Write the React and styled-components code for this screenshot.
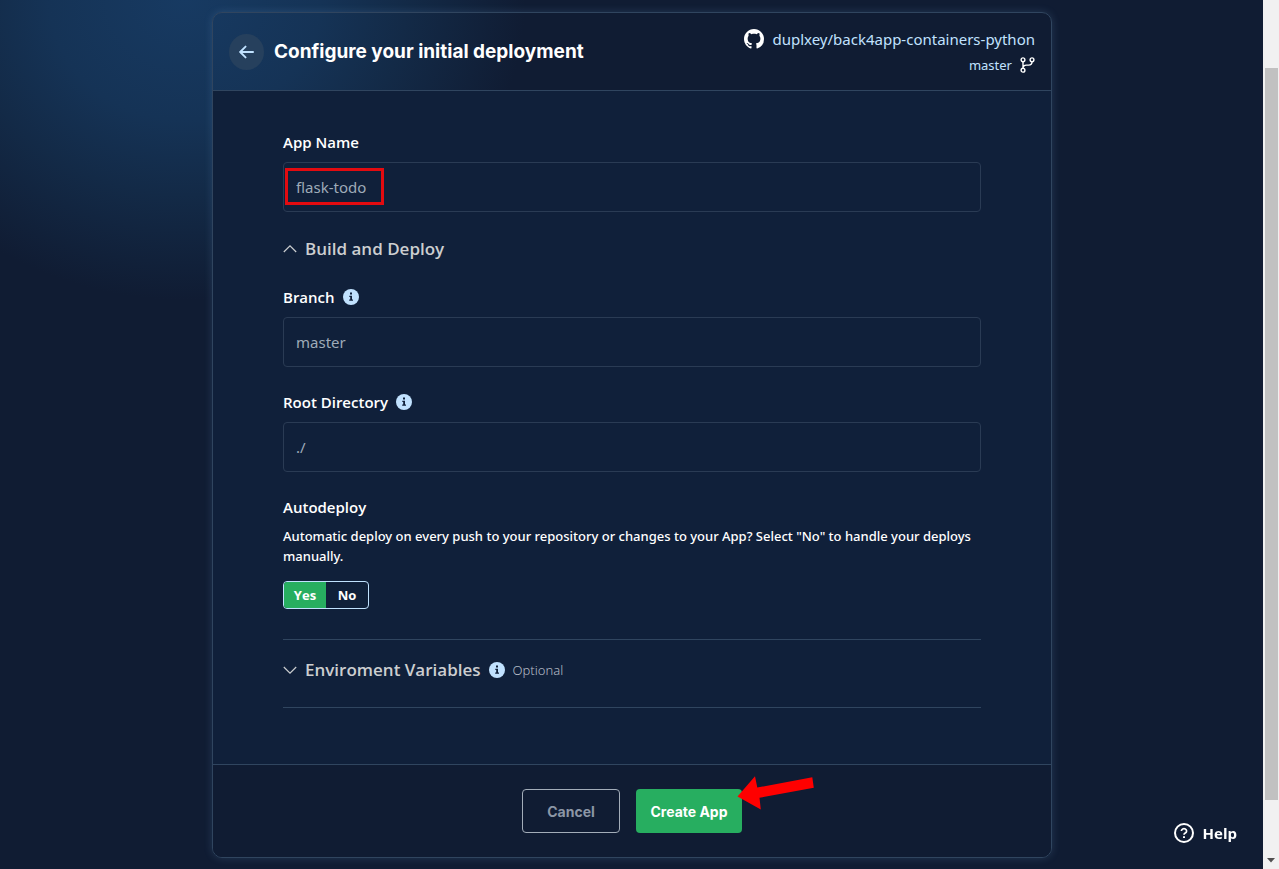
import React, { useState } from "react";
import styled, { createGlobalStyle } from "styled-components";

const GlobalStyle = createGlobalStyle`
  *, *::before, *::after { box-sizing: border-box; }
  body {
    margin: 0;
    background: #101c33;
    color: #fff;
    font-family: "Noto Sans", "Open Sans", sans-serif;
    font-size: 15px;
  }
  button, input { font: inherit; color: inherit; }
`;

const Page = styled.div`
  display: flex;
  min-height: 100vh;
`;

const Main = styled.main`
  flex: 1;
  min-width: 0;
  padding: 12px 15px 11px 16px;
  background: radial-gradient(ellipse 340px 300px at 185px 0, #173a62 0%, #153356 40%, #132a47 65%, rgba(16, 28, 51, 0) 100%);
`;

const Card = styled.form`
  max-width: 840px;
  margin: 0 auto;
  border: 1px solid #30455f;
  border-radius: 10px;
  box-shadow: 0 0 8px rgba(120, 170, 220, 0.2);
  overflow: hidden;
`;

const Header = styled.header`
  display: flex;
  align-items: center;
  gap: 10px;
  min-height: 78px;
  padding: 12px 16px;
  border-bottom: 1px solid #30455f;
`;

const BackButton = styled.button`
  display: grid;
  place-items: center;
  width: 35px;
  height: 36px;
  padding: 0;
  border: 0;
  border-radius: 50%;
  background: #26405d;
  color: #c1e2ff;
`;

const Title = styled.h1`
  flex: 1;
  margin: 0;
  font: 700 19px/24px Inter, sans-serif;
`;

const Repo = styled.div`
  display: flex;
  flex-direction: column;
  align-items: flex-end;
  color: #c1e2ff;
`;

const RepoLine = styled.div`
  display: flex;
  align-items: center;
  gap: 8px;
  font-size: ${(p) => (p.$small ? 13 : 15)}px;
  line-height: 26px;
  svg { color: #fff; }
`;

const RepoLink = styled.a`
  color: inherit;
  text-decoration: none;
`;

const Body = styled.div`
  padding: 39px 70px 56px;
  background: #10203a;
`;

const Field = styled.div`
  margin-bottom: 23px;
`;

const LabelRow = styled.div`
  display: flex;
  align-items: center;
  gap: 8px;
  margin-bottom: 8px;
  font-family: "Open Sans", sans-serif;
  font-weight: 600;
  line-height: 24px;
`;

const InputWrap = styled.div`
  position: relative;
`;

const TextInput = styled.input`
  display: block;
  width: 100%;
  height: 50px;
  padding: 0 12px;
  border: 1px solid #2a3b54;
  border-radius: 4px;
  background: transparent;
  color: #9fabb8;
  outline: none;
`;

const Highlight = styled.span`
  position: absolute;
  top: 6px;
  left: 2px;
  width: 99px;
  height: 37px;
  border: 3px solid #e30b10;
  pointer-events: none;
`;

const SectionRow = styled.div`
  display: flex;
  align-items: center;
  gap: 8px;
`;

const SectionToggle = styled.button`
  display: flex;
  align-items: center;
  gap: 8px;
  padding: 0;
  border: 0;
  background: none;
  color: #ccced0;
  font-family: "Open Sans", sans-serif;
  font-size: 17px;
  font-weight: 600;
  line-height: 26px;
`;

const SectionHeading = styled.h2`
  margin: 0 0 23px;
  padding-top: 1px;
  font-size: 17px;
  line-height: 26px;
`;

const Optional = styled.span`
  color: #b4bcc6;
  font-size: 13px;
  font-weight: 300;
`;

const EnvSection = styled.section`
  padding: 17px 0 24px;
  border: solid #30455f;
  border-width: 1px 0;
`;

const Choice = styled.fieldset`
  margin: 0 0 30px;
  padding: 0;
  border: 0;
`;

const ChoiceTitle = styled.legend`
  padding: 0;
  margin-bottom: 7px;
  font-family: "Open Sans", sans-serif;
  font-weight: 600;
  line-height: 24px;
`;

const Description = styled.p`
  margin: 0 0 15px;
  font-size: 13px;
  font-weight: 500;
  line-height: 20px;
`;

const Switch = styled.div`
  display: inline-flex;
  vertical-align: top;
  width: 86px;
  height: 28px;
  border: 1px solid #c1e2ff;
  border-radius: 4px;
  overflow: hidden;
`;

const Option = styled.label`
  position: relative;
  flex: 1;
  display: grid;
  place-items: center;
  background: ${(p) => (p.$on ? "#27ae60" : "transparent")};
  font-family: "Open Sans", sans-serif;
  font-size: 13px;
  font-weight: 700;
  input {
    position: absolute;
    inset: 0;
    margin: 0;
    opacity: 0;
  }
`;

const Footer = styled.footer`
  display: flex;
  justify-content: center;
  gap: 16px;
  padding: 24px;
  border-top: 1px solid #30455f;
  background: #101c33;
`;

const Button = styled.button`
  position: relative;
  width: ${(p) => (p.$primary ? 106 : 98)}px;
  height: 44px;
  padding: 0;
  border: ${(p) => (p.$primary ? "0" : "1px solid #a3adb9")};
  border-radius: 4px;
  background: ${(p) => (p.$primary ? "#27ae60" : "transparent")};
  color: ${(p) => (p.$primary ? "#fff" : "#8c96a6")};
  font: 700 14px Inter, sans-serif;
`;

const Arrow = styled.svg`
  position: absolute;
  top: -14px;
  left: 100px;
  pointer-events: none;
`;

const HelpButton = styled.button`
  position: fixed;
  right: 42px;
  bottom: 24px;
  display: flex;
  align-items: center;
  gap: 9px;
  padding: 0;
  border: 0;
  background: none;
  font: 700 15px/24px "Open Sans", sans-serif;
`;

const Scrollbar = styled.div`
  display: flex;
  flex-direction: column;
  align-items: center;
  width: 16px;
  padding: 68px 1px 6px;
  background: #f1f1f1;
`;

const Thumb = styled.div`
  flex: 1;
  width: 13px;
  margin-bottom: 58px;
  background: #c1c1c1;
`;

function Info() {
  return (
    <svg width="16" height="16" viewBox="0 0 16 16" aria-hidden="true">
      <circle cx="8" cy="8" r="8" fill="#c1e2ff" />
      <path d="M7 3.6h2v2H7zM6.3 6.8H9v3.7h1v1.3H6.2v-1.3h1V8.1h-.9z" fill="#10203a" />
    </svg>
  );
}

function Chevron({ up }) {
  return (
    <svg width="14" height="14" viewBox="0 0 14 14" fill="none" stroke="#ccced0" strokeWidth="1.2" aria-hidden="true">
      <path d={up ? "M.8 10 7 3.8 13.2 10" : "M.8 4 7 10.2 13.2 4"} />
    </svg>
  );
}

function TextField({ id, label, value, info, marked }) {
  return (
    <Field>
      <LabelRow>
        <label htmlFor={id}>{label}</label>
        {info && <Info />}
      </LabelRow>
      <InputWrap>
        <TextInput id={id} defaultValue={value} />
        {marked && <Highlight />}
      </InputWrap>
    </Field>
  );
}

export default function App() {
  const [auto, setAuto] = useState("Yes");
  return (
    <Page>
      <GlobalStyle />
      <Main>
        <Card onSubmit={(e) => e.preventDefault()}>
          <Header>
            <BackButton type="button" aria-label="Back">
              <svg width="15" height="14" viewBox="0 0 16 14" fill="none" stroke="currentColor" strokeWidth="2" strokeLinecap="round" strokeLinejoin="round">
                <path d="M15 7H1.5M7 1.2 1.2 7 7 12.8" />
              </svg>
            </BackButton>
            <Title>Configure your initial deployment</Title>
            <Repo>
              <RepoLine>
                <svg width="20" height="20" viewBox="0 0 16 16" fill="currentColor" aria-hidden="true">
                  <path d="M8 0C3.58 0 0 3.58 0 8c0 3.54 2.29 6.53 5.47 7.59.4.07.55-.17.55-.38 0-.19-.01-.82-.01-1.49-2.01.37-2.53-.49-2.69-.94-.09-.23-.48-.94-.82-1.13-.28-.15-.68-.52-.01-.53.63-.01 1.08.58 1.23.82.72 1.21 1.87.87 2.33.66.07-.52.28-.87.51-1.07-1.78-.2-3.64-.89-3.64-3.95 0-.87.31-1.59.82-2.15-.08-.2-.36-1.02.08-2.12 0 0 .67-.21 2.2.82.64-.18 1.32-.27 2-.27s1.36.09 2 .27c1.53-1.04 2.2-.82 2.2-.82.44 1.1.16 1.92.08 2.12.51.56.82 1.27.82 2.15 0 3.07-1.87 3.75-3.65 3.95.29.25.54.73.54 1.48 0 1.07-.01 1.93-.01 2.2 0 .21.15.46.55.38A8.01 8.01 0 0 0 16 8c0-4.42-3.58-8-8-8z" />
                </svg>
                <RepoLink href="#repo">duplxey/back4app-containers-python</RepoLink>
              </RepoLine>
              <RepoLine $small>
                <span>master</span>
                <svg width="15" height="16" viewBox="0 0 15 16" fill="none" stroke="currentColor" strokeWidth="1.4" aria-hidden="true">
                  <circle cx="3" cy="2.8" r="1.9" />
                  <circle cx="12" cy="2.8" r="1.9" />
                  <circle cx="3" cy="13.2" r="1.9" />
                  <path d="M3 4.7v6.6M12 4.7c0 2.6-1.2 3.4-3.4 3.4H6.4C4.2 8.1 3 9 3 11.3" />
                </svg>
              </RepoLine>
            </Repo>
          </Header>
          <Body>
            <TextField id="app-name" label="App Name" value="flask-todo" marked />
            <SectionHeading>
              <SectionToggle type="button" aria-expanded="true">
                <Chevron up />
                Build and Deploy
              </SectionToggle>
            </SectionHeading>
            <TextField id="branch" label="Branch" value="master" info />
            <TextField id="root" label="Root Directory" value="./" info />
            <Choice>
              <ChoiceTitle>Autodeploy</ChoiceTitle>
              <Description>
                Automatic deploy on every push to your repository or changes to your App? Select "No" to handle your deploys
                manually.
              </Description>
              <Switch>
                {["Yes", "No"].map((name) => (
                  <Option key={name} $on={auto === name}>
                    <input type="radio" name="autodeploy" checked={auto === name} onChange={() => setAuto(name)} />
                    {name}
                  </Option>
                ))}
              </Switch>
            </Choice>
            <EnvSection>
              <SectionRow>
                <SectionToggle type="button" aria-expanded="false">
                  <Chevron />
                  Enviroment Variables
                </SectionToggle>
                <Info />
                <Optional>Optional</Optional>
              </SectionRow>
            </EnvSection>
          </Body>
          <Footer>
            <Button type="button">Cancel</Button>
            <Button type="submit" $primary>
              Create App
              <Arrow width="80" height="36" viewBox="0 0 80 36" aria-hidden="true">
                <path d="M1.5 21.5 19 1.2 21.3 12.6 76.3 2.3 77.8 12.8 23.5 22.8 24.8 34.6Z" fill="#f00" />
              </Arrow>
            </Button>
          </Footer>
        </Card>
      </Main>
      <HelpButton type="button">
        <svg width="20" height="20" viewBox="0 0 20 20" fill="none" stroke="currentColor" strokeWidth="2" aria-hidden="true">
          <circle cx="10" cy="10" r="9" />
          <path d="M7.4 8a2.6 2.4 0 1 1 3.9 2.1c-.9.5-1.3.8-1.3 1.7" strokeWidth="1.7" />
          <path d="M9 13.2h2v1.9H9z" fill="currentColor" stroke="none" />
        </svg>
        Help
      </HelpButton>
      <Scrollbar aria-hidden="true">
        <Thumb />
        <svg width="8" height="5" viewBox="0 0 8 5">
          <path d="M0 0h8L4 4.5z" fill="#505050" />
        </svg>
      </Scrollbar>
    </Page>
  );
}
